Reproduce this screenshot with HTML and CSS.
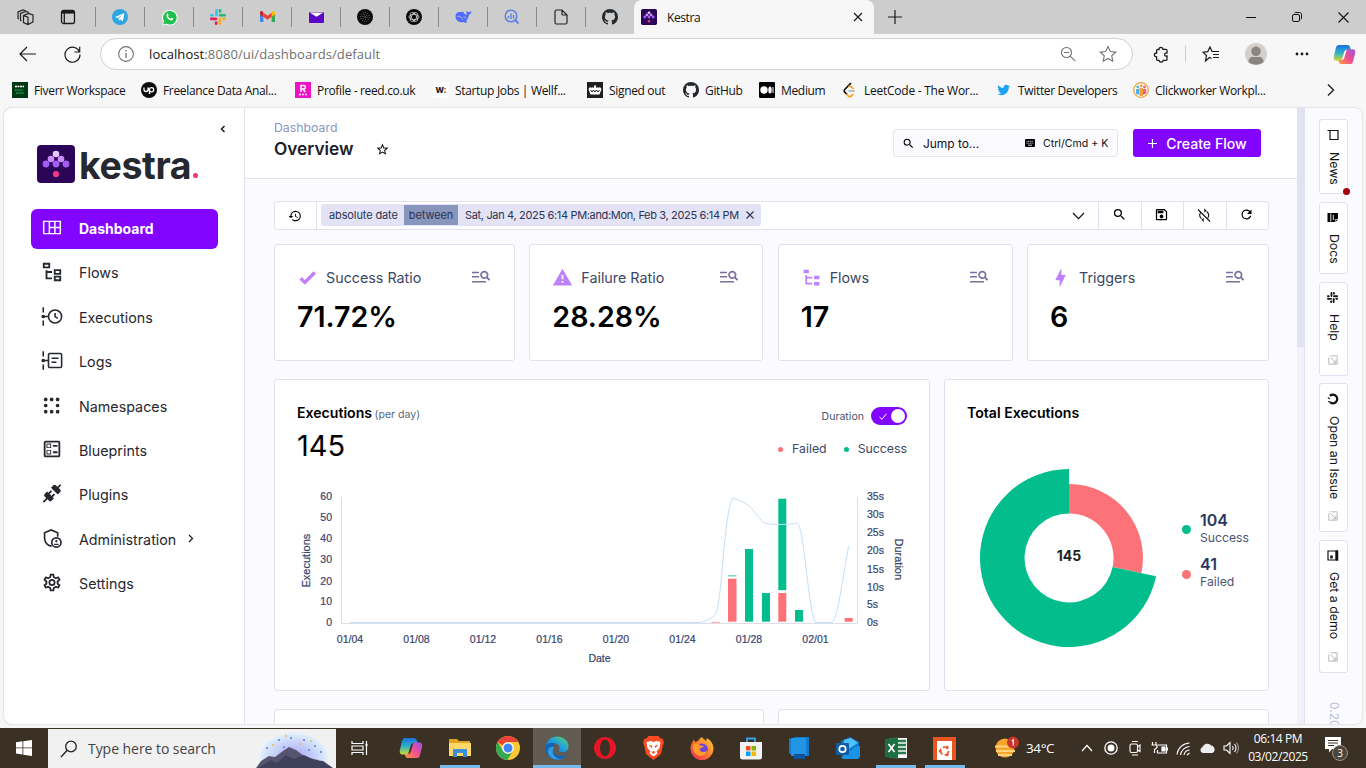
FILE: index.html
```html
<!DOCTYPE html>
<html lang="en">
<head>
<meta charset="utf-8">
<title>Kestra</title>
<link rel="stylesheet" href="styles.css">
</head>
<body>
<svg class="defs" width="0" height="0">
  <defs>
    <symbol id="github" viewBox="2 2 20 20"><path d="M12,2A10,10 0 0,0 2,12C2,16.42 4.87,20.17 8.84,21.5C9.34,21.58 9.5,21.27 9.5,21C9.5,20.77 9.5,20.14 9.5,19.31C6.73,19.91 6.14,17.97 6.14,17.97C5.68,16.81 5.03,16.5 5.03,16.5C4.12,15.88 5.1,15.9 5.1,15.9C6.1,15.97 6.63,16.93 6.63,16.93C7.5,18.45 8.97,18 9.54,17.76C9.63,17.11 9.89,16.67 10.17,16.42C7.95,16.17 5.62,15.31 5.62,11.5C5.62,10.39 6,9.5 6.65,8.79C6.55,8.54 6.2,7.5 6.75,6.15C6.75,6.15 7.59,5.88 9.5,7.17C10.29,6.95 11.15,6.84 12,6.84C12.85,6.84 13.71,6.95 14.5,7.17C16.41,5.88 17.25,6.15 17.25,6.15C17.8,7.5 17.45,8.54 17.35,8.79C18,9.5 18.38,10.39 18.38,11.5C18.38,15.32 16.04,16.16 13.81,16.41C14.17,16.72 14.5,17.33 14.5,18.26C14.5,19.6 14.5,20.68 14.5,21C14.5,21.27 14.66,21.59 15.17,21.5C19.14,20.16 22,16.42 22,12A10,10 0 0,0 12,2Z"/></symbol>
    <symbol id="magnify" viewBox="0 0 24 24"><path d="M9.5,3A6.5,6.5 0 0,1 16,9.5C16,11.11 15.41,12.59 14.44,13.73L14.71,14H15.5L20.5,19L19,20.5L14,15.5V14.71L13.73,14.44C12.59,15.41 11.11,16 9.5,16A6.5,6.5 0 0,1 3,9.5A6.5,6.5 0 0,1 9.5,3M9.5,5C7,5 5,7 5,9.5C5,12 7,14 9.5,14C12,14 14,12 14,9.5C14,7 12,5 9.5,5Z"/></symbol>
    <symbol id="list-search" viewBox="0 0 20 14"><path d="M1 2.500h7M1 6.800h7M1 11.800h14" fill="none" stroke="#7c6fa0" stroke-width="1.500"/><circle cx="13.300" cy="4.900" r="3.300" fill="none" stroke="#7c6fa0" stroke-width="1.700"/><path d="M15.600 7.200l3 3" stroke="#7c6fa0" stroke-width="1.900"/></symbol>
    <symbol id="kestra-mark" viewBox="0 0 38 38"><rect width="38" height="38" rx="4" fill="#2b0558"/><circle cx="19" cy="9" r="3.300" fill="#e5c5ff"/><circle cx="14" cy="14" r="3.300" fill="#cb8dfb"/><circle cx="24" cy="14" r="3.300" fill="#cb8dfb"/><circle cx="9" cy="19" r="3.400" fill="#a45cf5"/><circle cx="19" cy="19" r="3.400" fill="#a45cf5"/><circle cx="29" cy="19" r="3.400" fill="#a45cf5"/><circle cx="19" cy="29" r="3.100" fill="#f03a88"/></symbol>
    <symbol id="ext" viewBox="0 0 12 12"><path d="M1 3v8h10V1H3.500M1 1h1M3 3l6.500 6.500M5.500 9.500h4v-4" fill="none" stroke="#b8b8bc" stroke-width="1.200"/></symbol>
    <symbol id="slack4" viewBox="0 0 16 16"><rect x="5.200" y="0" width="2.600" height="7.200" rx="1.300" fill="var(--a)"/><rect x="0" y="4.900" width="3.900" height="2.600" rx="1.200" fill="var(--a)"/><rect x="8.800" y="4.900" width="7.200" height="2.600" rx="1.300" fill="var(--b)"/><rect x="8.800" y="0" width="2.600" height="3.900" rx="1.200" fill="var(--b)"/><rect x="8.400" y="8.600" width="2.600" height="7.400" rx="1.300" fill="var(--c)"/><rect x="12.200" y="8.600" width="3.800" height="2.600" rx="1.200" fill="var(--c)"/><rect x="0" y="8.600" width="7.200" height="2.600" rx="1.300" fill="var(--d)"/><rect x="4.800" y="12.200" width="2.600" height="3.800" rx="1.200" fill="var(--d)"/></symbol>
    <linearGradient id="cpA" x1="0" y1="0" x2="0" y2="1"><stop offset="0" stop-color="#1d6fdd"/><stop offset=".5" stop-color="#2bb3c9"/><stop offset="1" stop-color="#d9d62d"/></linearGradient>
    <linearGradient id="cpB" x1="1" y1="0" x2="0" y2="1"><stop offset="0" stop-color="#9a54e8"/><stop offset=".5" stop-color="#ef4f90"/><stop offset="1" stop-color="#ff9a3d"/></linearGradient>
    <linearGradient id="edgeG" x1="0" y1="1" x2="1" y2="0"><stop offset="0" stop-color="#0c59b4"/><stop offset=".5" stop-color="#1d9fe0"/><stop offset="1" stop-color="#5bd85f"/></linearGradient>
    <linearGradient id="ffG" x1="1" y1="0" x2="0" y2="1"><stop offset="0" stop-color="#ffd93b"/><stop offset=".5" stop-color="#ff7a2b"/><stop offset="1" stop-color="#e8225f"/></linearGradient>
    <symbol id="copilot" viewBox="0 0 24 22"><path d="M6 1h9c2 0 2.500 1 3 3l.7 2H15c-2 0-3 1-3.500 3l-1.700 6c-.5 2-1.300 2.500-3 2.500H3.500C1 17.500.2 15.500 1 12.500L3 4C3.500 2 4.500 1 6 1z" fill="url(#cpA)"/><path d="M18 21H9c-2 0-2.500-1-3-3l-.2-1h2.700c2 0 3-1 3.500-3l1.700-6c.5-2 1.300-2.500 3-2.500h3.800c2.500 0 3.300 2 2.500 5L21 18c-.5 2-1.500 3-3 3z" fill="url(#cpB)"/></symbol>
  </defs>
</svg>

<header class="tabs">
  <div class="tab-tools">
    <svg width="17" height="17" viewBox="0 0 17 17" fill="none" stroke="#222" stroke-width="1.200"><path d="M6.500 6.500l5-2 4.500 1.500v7l-5 2.500-4.500-2zM6.500 6.500l4.500 1.700v7M4.500 12l-1-.5v-7L9 2.500l3 1M2 10l-1-.5V3l5-2 3 1"/></svg>
    <svg width="16" height="16" viewBox="0 0 16 16" fill="none" stroke="#1b1b1b" stroke-width="1.300"><rect x="1.500" y="1.500" width="13" height="13" rx="2"/><path d="M1.500 3.300h13" stroke-width="2.600"/><path d="M4.300 4v10"/></svg>
  </div>
  <div class="pin"><svg width="16" height="16" viewBox="0 0 16 16"><circle cx="8" cy="8" r="8" fill="#2ca5e0"/><path d="M3 8l9.500-3.900-1.600 8.200-2.600-1.900-1.400 1.300-.3-2.300 4-3.700-5 3.200z" fill="#fff"/></svg></div>
  <div class="pin"><svg width="17" height="17" viewBox="0 0 17 17"><path d="M1 16.500l1-4A7.800 7.800 0 1 1 5 15.500z" fill="#fff"/><path d="M2 15.500l1-3.300A6.800 6.800 0 1 1 5.300 14.500z" fill="#1cc04a"/><path d="M5.500 5c.5-.9 1.300-.8 1.600 0l.5 1.200-.7 1c.7 1.300 1.500 2 2.800 2.500l.9-1 1.700.9c0 1.600-1.400 2.100-2.600 1.800C7 10.600 5 8 5.500 5z" fill="#fff"/></svg></div>
  <div class="pin"><svg class="slack-color" width="16" height="16"><use href="#slack4"/></svg></div>
  <div class="pin"><svg width="15" height="12" viewBox="0 0 15 12"><path d="M0 1.500V11h3.400V5z" fill="#4285f4"/><path d="M15 1.500V11h-3.400V5z" fill="#34a853"/><path d="M11.600 2v4L15 3.500V1.600C15 .2 13.500-.4 12.400.5z" fill="#fbbc04"/><path d="M3.400 2v4L0 3.500V1.600C0 .2 1.500-.4 2.600.5z" fill="#c5221f"/><path d="M3.400 1.800v4l4.100 3 4.100-3v-4L7.500 4.800z" fill="#ea4335"/></svg></div>
  <div class="pin"><svg width="15" height="11" viewBox="0 0 15 11"><rect width="15" height="11" rx="1" fill="#5b08c9"/><path d="M.5 .5l7 4.300L14.500 .5z" fill="#fff"/></svg></div>
  <div class="pin"><svg width="16" height="16" viewBox="0 0 16 16"><circle cx="8" cy="8" r="8" fill="#0b0b0b"/><g fill="none" stroke="#777" stroke-dasharray="1 1.200"><circle cx="8" cy="8" r="4.300"/><circle cx="8" cy="8" r="2.300"/></g><circle cx="8" cy="8" r=".7" fill="#999"/></svg></div>
  <div class="pin"><svg width="16" height="16" viewBox="0 0 16 16"><circle cx="8" cy="8" r="8" fill="#0b0b0b"/><g fill="none" stroke="#d8d8d8" stroke-width=".8"><ellipse cx="8" cy="8" rx="5" ry="2.600"/><ellipse cx="8" cy="8" rx="5" ry="2.600" transform="rotate(60 8 8)"/><ellipse cx="8" cy="8" rx="5" ry="2.600" transform="rotate(120 8 8)"/></g></svg></div>
  <div class="pin"><svg width="17" height="14" viewBox="0 0 17 14"><path d="M.5 6C.5 3 3 1.500 5.500 2c1.500.3 2-.7 3.300-.2-.5.600-.4 1.200.4 1.700 1 .6 1.500 1.500 2.300 1.500C12.200 3.800 11 3 11.300.8c.8 1.200 1.700 1 2.800 1.400.8-.8 1.700-.9 2.400-.7-.2 2-1.500 3-2.800 3.500-.2 3-1.200 4.500-2.700 5.700l1.400 1.600c-1.400.7-2.900.3-4-.3C4 13 .5 10.500.5 6z" fill="#4d6bfe"/><path d="M2.500 6.500c2-1 4.300.8 5.300 3.200M8.500 6.800c1-.2 1.800.4 2 1.500" fill="none" stroke="#cdcdcd" stroke-width=".9"/></svg></div>
  <div class="pin"><svg width="16" height="16" viewBox="0 0 16 16" fill="none" stroke="#5b84e0"><circle cx="7" cy="7" r="5.800" stroke-width="1.500"/><path d="M11.300 11.300l3.200 3.200" stroke-width="2"/><path d="M4.500 7v2.200M7 4.500v5.500M9.500 6v3.500" stroke-width="1.400"/></svg></div>
  <div class="pin"><svg width="14" height="16" viewBox="0 0 14 16" fill="none" stroke="#222" stroke-width="1.200"><path d="M1 2.500C1 1.500 1.500 1 2.500 1H8l5 5v7.500c0 1-.5 1.500-1.500 1.500h-9C1.500 15 1 14.500 1 13.500zM8 1v4c0 .7.300 1 1 1h4"/></svg></div>
  <div class="pin"><svg width="16" height="16" fill="#24292e"><use href="#github"/></svg></div>
  <div class="tab-active">
    <svg width="16" height="16"><use href="#kestra-mark"/></svg>
    <span class="tab-title">Kestra</span>
    <svg width="10" height="10" viewBox="0 0 10 10" stroke="#1b1b1b" stroke-width="1.200"><path d="M1 1l8 8M9 1l-8 8"/></svg>
  </div>
  <svg class="tab-new" width="14" height="14" viewBox="0 0 14 14" stroke="#1b1b1b" stroke-width="1.200"><path d="M7 0v14M0 7h14"/></svg>
  <div class="win">
    <svg width="10" height="10" viewBox="0 0 10 10" stroke="#111" stroke-width="1"><path d="M0 5.500h10"/></svg>
    <svg width="10" height="10" viewBox="0 0 10 10" fill="none" stroke="#111"><rect x=".5" y="2.500" width="7" height="7" rx="1.500"/><path d="M2.500 1c.3-.4.700-.5 1.200-.5h3.500c1.500 0 2.300.8 2.300 2.300v3.500c0 .5-.2 1-.6 1.200"/></svg>
    <svg width="11" height="11" viewBox="0 0 11 11" stroke="#111" stroke-width="1.100"><path d="M.5.5l10 10M10.500.5l-10 10"/></svg>
  </div>
</header>

<div class="toolbar">
  <svg class="nav-back" width="17" height="16" viewBox="0 0 17 16" fill="none" stroke="#1b1b1b" stroke-width="1.200"><path d="M17 8H1M8 1L1 8l7 7"/></svg>
  <svg class="nav-reload" width="17" height="17" viewBox="0 0 17 17" fill="none" stroke="#1b1b1b" stroke-width="1.200"><path d="M15.500 6A7.500 7.500 0 1 0 16 8.500M15.700.8V6h-5.200"/></svg>
  <div class="address">
    <svg width="16" height="16" viewBox="0 0 16 16" fill="none" stroke="#707070"><circle cx="8" cy="8" r="7.400" stroke-width="1.100"/><path d="M8 7v5M8 4v1.500" stroke-width="1.300"/></svg>
    <span class="url"><b>localhost</b>:8080/ui/dashboards/default</span>
    <svg width="16" height="16" viewBox="0 0 16 16" fill="none" stroke="#707070" stroke-width="1.100"><circle cx="6.500" cy="6.500" r="5"/><path d="M10.200 10.200l5 5M4 6.500h5"/></svg>
    <svg class="fav" width="18" height="18" viewBox="0 0 18 18" fill="none" stroke="#707070" stroke-width="1.100"><path d="M9 1.500l2.300 5 5.400.6-4 3.700 1.100 5.400L9 13.500l-4.800 2.700 1.100-5.400-4-3.700 5.400-.6z"/></svg>
  </div>
  <div class="tool-icons">
    <svg width="16" height="17" viewBox="0 0 16 17" fill="none" stroke="#1b1b1b" stroke-width="1.300"><path d="M6 3.500a2 2 0 0 1 4-.2h2.800c.8 0 1.200.4 1.200 1.200V7c-3-.6-3.500 3.500 0 3v3.200c0 .8-.4 1.200-1.200 1.200H10.300c-.3 2.300-4 2.300-4.300 0H4.800c-.8 0-1.200-.4-1.200-1.200V11c-2.900 0-2.900-4 0-4V4.700c0-.8.400-1.200 1.200-1.200z"/></svg>
    <i class="tool-sep"></i>
    <svg class="t-favs" width="18" height="17" viewBox="0 0 18 17" fill="none" stroke="#1b1b1b" stroke-width="1.200"><path d="M9.500 12.500L7.500 11.500 3.500 15l1-5.500L1 6.200l4.800-.6L8 1l2 4.500h7M11 8.500h6M11 11.500h6"/></svg>
    <svg class="t-user" width="22" height="22" viewBox="0 0 22 22"><circle cx="11" cy="11" r="11" fill="#d2cfcc"/><circle cx="11" cy="8.300" r="4.800" fill="#8a8581"/><path d="M3.500 19c0-3.500 2-5 4-5h7c2 0 4 1.500 4 5-4 3.700-11 3.700-15 0z" fill="#8a8581"/></svg>
    <svg class="t-more" width="14" height="4" viewBox="0 0 14 4" fill="#1b1b1b"><circle cx="2" cy="2" r="1.400"/><circle cx="7" cy="2" r="1.400"/><circle cx="12" cy="2" r="1.400"/></svg>
    <svg class="t-cop" width="23" height="21"><use href="#copilot"/></svg>
  </div>
</div>

<nav class="bookmarks">
  <a class="bm w1"><svg width="16" height="16" viewBox="0 0 16 16"><rect width="16" height="16" fill="#003912"/><path d="M3 4.500h9" stroke="#fff" stroke-width="1.500" stroke-dasharray="2 .5"/><path d="M3 8h8M4 11h8" stroke="#159a58" stroke-width="1.500" stroke-dasharray="1.500 .6"/></svg><span>Fiverr Workspace</span></a>
  <a class="bm w2"><svg width="16" height="16" viewBox="0 0 16 16"><circle cx="8" cy="8" r="8" fill="#0c0c0c"/><path d="M3 5.500v2a2 2 0 0 0 4 0v-2M8.500 12V7.500a2.100 2.100 0 1 1 2.100 2.300c-1.600 0-3-2-3.400-4" fill="none" stroke="#fff" stroke-width="1.300"/></svg><span>Freelance Data Anal...</span></a>
  <a class="bm w3"><svg width="16" height="16" viewBox="0 0 16 16"><rect width="16" height="16" fill="#f012c8"/><path d="M6 10V3.600h2.700a1.600 1.600 0 0 1 0 3.400H6M8 7l2.200 3" fill="none" stroke="#fff" stroke-width="1.500"/><path d="M4 12.500h8" stroke="#fff" stroke-width="1.500" stroke-dasharray="2 1"/></svg><span>Profile - reed.co.uk</span></a>
  <a class="bm w4"><span class="wf">w<i>:</i></span><span>Startup Jobs | Wellf...</span></a>
  <a class="bm w5"><svg width="16" height="16" viewBox="0 0 16 16"><rect width="16" height="16" fill="#1f1f1f"/><path d="M3.500 12.500L2 8.500a1.900 1.900 0 0 1 2.500-2.800A1.900 1.900 0 0 1 7 6V3.500h2V6a1.900 1.900 0 0 1 2.500-.3A1.900 1.900 0 0 1 14 8.500l-1.500 4z" fill="#fff"/><path d="M3.500 8l1.500 2 1.500-2L8 10l1.500-2 1.500 2 1.500-2" fill="none" stroke="#1f1f1f" stroke-width="1"/></svg><span>Signed out</span></a>
  <a class="bm w6"><svg width="16" height="16" fill="#24292e"><use href="#github"/></svg><span>GitHub</span></a>
  <a class="bm w7"><svg width="16" height="16" viewBox="0 0 16 16"><rect width="16" height="16" rx="1" fill="#000"/><circle cx="5" cy="8" r="3.700" fill="#fff"/><ellipse cx="11" cy="8" rx="1.700" ry="3.500" fill="#fff"/><path d="M14 5v6" stroke="#fff"/></svg><span>Medium</span></a>
  <a class="bm w8"><svg width="16" height="16" viewBox="0 0 16 16" fill="none" stroke-width="1.700"><path d="M9 1L2.700 7.500c-.8.900-.8 1.800 0 2.600L5 12.500" stroke="#111"/><path d="M4.500 12l1.800 2c1 .9 2 .9 3 0l2-2M6.500 4.800c1-.9 2-.7 2.800 0L11.500 7" stroke="#f5a11f"/><path d="M6.500 9H13" stroke="#b3b3b3"/></svg><span>LeetCode - The Wor...</span></a>
  <a class="bm w9"><svg width="14" height="14" viewBox="1 2 23 21" fill="#1da1f2"><path d="M22.460,6C21.690,6.350 20.860,6.580 20,6.690C20.880,6.160 21.560,5.320 21.880,4.310C21.050,4.810 20.130,5.160 19.160,5.360C18.370,4.500 17.260,4 16,4C13.650,4 11.730,5.920 11.730,8.290C11.730,8.630 11.770,8.960 11.840,9.270C8.280,9.090 5.110,7.380 3,4.790C2.630,5.420 2.420,6.160 2.420,6.940C2.420,8.430 3.170,9.750 4.330,10.500C3.620,10.500 2.960,10.300 2.380,10C2.380,12.110 3.860,13.850 5.820,14.240C5.460,14.340 5.080,14.390 4.690,14.390C4.420,14.390 4.150,14.360 3.890,14.310C4.430,16 6,17.260 7.890,17.290C6.430,18.450 4.580,19.130 2.560,19.130L1.540,19.070C3.440,20.290 5.700,21 8.120,21C16,21 20.330,14.460 20.330,8.790L20.320,8.230C21.160,7.630 21.880,6.870 22.460,6Z"/></svg><span>Twitter Developers</span></a>
  <a class="bm w10"><svg width="16" height="16" viewBox="0 0 16 16"><circle cx="8" cy="8" r="7.300" fill="#fff" stroke="#f0a23c" stroke-width="1.300"/><circle cx="4.800" cy="5" r="1.400" fill="#4fb3e6"/><path d="M3 7h3.500v6L3 12z" fill="#4fb3e6"/><circle cx="8.200" cy="4" r="1.400" fill="#f0a23c"/><path d="M6.500 6H10v8H6.500z" fill="#f0a23c"/><circle cx="11.500" cy="5" r="1.400" fill="#e6647d"/><path d="M10 7h3.300v4.500L10 13z" fill="#e6647d"/></svg><span>Clickworker Workpl...</span></a>
  <svg class="bm-more" width="8" height="12" viewBox="0 0 8 12" fill="none" stroke="#222" stroke-width="1.400"><path d="M1 .5l5.500 5.500L1 11.500"/></svg>
</nav>

<main class="app">
  <aside class="side">
    <svg class="collapse" width="6" height="8" viewBox="0 0 6 8" fill="none" stroke="#111" stroke-width="1.400"><path d="M4.500 1L1.500 4l3 3"/></svg>
    <div class="logo"><svg width="38" height="38"><use href="#kestra-mark"/></svg><span class="word">kestra</span><i class="dot"></i></div>
    <ul class="menu">
      <li class="on"><svg viewBox="0 0 24 24" width="21" height="21" fill="none" stroke="currentColor" stroke-width="1.700"><path d="M2.500 5h19v14h-19zM9 5v14M15.300 5v14M9 12h12.500"/></svg><span>Dashboard</span></li>
      <li><svg viewBox="0 0 24 24" width="22" height="22"><path d="M12 13H7v5h5v2H5V10h2v1h5v2M8 4v2H4V4h4m2-2H2v6h8V2m10 9v2h-4v-2h4m2-2h-8v6h8V9m-2 9v2h-4v-2h4m2-2h-8v6h8v-6Z"/></svg><span>Flows</span></li>
      <li><svg viewBox="0 0 24 24" width="21" height="21" fill="none" stroke="currentColor" stroke-width="1.800"><path d="M2 1.500v6M2 16.500v6M3 12h5M15.500 8v4.200l3 2"/><circle cx="15.500" cy="12" r="7.500"/><circle cx="2" cy="12" r="1.200" fill="currentColor"/></svg><span>Executions</span></li>
      <li><svg viewBox="0 0 24 24" width="21" height="21" fill="none" stroke="currentColor" stroke-width="1.800"><path d="M2 1.500v6M2 16.500v6M3 12h5M11.500 9.500h8M11.500 14h5.500"/><rect x="8" y="4" width="15" height="16" rx="1.500"/><circle cx="2" cy="12" r="1.200" fill="currentColor"/></svg><span>Logs</span></li>
      <li><svg viewBox="0 0 24 24" width="21" height="21"><circle cx="4.800" cy="5" r="2.100"/><circle cx="11.600" cy="5" r="2.100"/><circle cx="18.400" cy="5" r="2.100"/><circle cx="4.800" cy="12" r="2.100"/><circle cx="18.400" cy="12" r="2.100"/><circle cx="4.800" cy="19" r="2.100"/><circle cx="11.600" cy="19" r="2.100"/><circle cx="18.400" cy="19" r="2.100"/></svg><span>Namespaces</span></li>
      <li><svg viewBox="0 0 24 24" width="22" height="22"><path d="M13 7.500h5v2h-5zm0 7h5v2h-5zM19 3H5c-1.100 0-2 .9-2 2v14c0 1.100.9 2 2 2h14c1.100 0 2-.9 2-2V5c0-1.100-.9-2-2-2m0 16H5V5h14v14M11 6H6v5h5V6m-1 4H7V7h3v3m1 3H6v5h5v-5m-1 4H7v-3h3v3Z"/></svg><span>Blueprints</span></li>
      <li><svg viewBox="0 0 24 24" width="21" height="21"><path d="M21.400 7.500c.8.800.8 2.100 0 2.800l-2.800 2.800-7.800-7.800 2.800-2.800c.8-.8 2.100-.8 2.800 0l1.800 1.800 3-3 1.400 1.400-3 3 1.800 1.800m-5.800 5.800-1.400-1.400-2.800 2.800-2.100-2.100 2.800-2.800-1.400-1.400-2.800 2.800-1.500-1.400-2.800 2.800c-.8.8-.8 2.100 0 2.800l1.800 1.800-4 4 1.400 1.400 4-4 1.800 1.800c.8.800 2.100.8 2.800 0l2.800-2.800-1.400-1.400 2.800-2.800Z"/></svg><span>Plugins</span></li>
      <li><svg viewBox="0 0 24 24" width="21" height="21" fill="none" stroke="currentColor" stroke-width="1.900"><path d="M11.500 21c-5-1.500-8-5-8-10V5.500L11 2.200l7.500 3.300V10"/><circle cx="17" cy="16.500" r="5.300"/><circle cx="17" cy="15" r=".9" fill="currentColor" stroke-width="1"/><path d="M14.500 18.800h5" stroke-width="1.500"/></svg><span>Administration</span><svg class="more" width="6" height="9" viewBox="0 0 6 9" fill="none" stroke="#222" stroke-width="1.300"><path d="M1 1l3.500 3.500L1 8"/></svg></li>
      <li><svg viewBox="0 0 24 24" width="21" height="21"><path d="M12,8A4,4 0 0,1 16,12A4,4 0 0,1 12,16A4,4 0 0,1 8,12A4,4 0 0,1 12,8M12,10A2,2 0 0,0 10,12A2,2 0 0,0 12,14A2,2 0 0,0 14,12A2,2 0 0,0 12,10M10,22C9.750,22 9.540,21.820 9.500,21.580L9.130,18.930C8.500,18.680 7.960,18.340 7.440,17.940L4.950,18.950C4.730,19.030 4.460,18.950 4.340,18.730L2.340,15.270C2.210,15.050 2.270,14.780 2.460,14.630L4.570,12.970L4.500,12L4.570,11L2.460,9.370C2.270,9.220 2.210,8.950 2.340,8.730L4.340,5.270C4.460,5.050 4.730,4.960 4.950,5.050L7.440,6.050C7.960,5.660 8.500,5.320 9.130,5.070L9.500,2.420C9.540,2.180 9.750,2 10,2H14C14.250,2 14.460,2.180 14.500,2.420L14.870,5.070C15.500,5.320 16.040,5.660 16.560,6.050L19.050,5.050C19.270,4.960 19.540,5.050 19.660,5.270L21.660,8.730C21.790,8.950 21.730,9.220 21.540,9.370L19.430,11L19.500,12L19.430,13L21.540,14.630C21.730,14.780 21.790,15.050 21.660,15.270L19.660,18.730C19.540,18.950 19.270,19.040 19.050,18.950L16.560,17.950C16.040,18.340 15.500,18.680 14.870,18.930L14.500,21.580C14.460,21.820 14.250,22 14,22H10M11.250,4L10.880,6.610C9.680,6.860 8.620,7.500 7.850,8.390L5.440,7.350L4.690,8.650L6.800,10.200C6.400,11.370 6.400,12.640 6.800,13.800L4.680,15.360L5.430,16.660L7.860,15.620C8.630,16.500 9.680,17.140 10.870,17.380L11.240,20H12.760L13.130,17.390C14.320,17.140 15.370,16.500 16.140,15.620L18.570,16.660L19.320,15.360L17.200,13.810C17.600,12.640 17.600,11.370 17.200,10.200L19.310,8.650L18.560,7.350L16.150,8.390C15.380,7.500 14.320,6.860 13.120,6.620L12.750,4H11.250Z"/></svg><span>Settings</span></li>
    </ul>
  </aside>

  <section class="page">
    <header class="top">
      <div class="titles">
        <div class="crumb">Dashboard</div>
        <h1><span>Overview</span><svg width="13" height="13" viewBox="1 1 22 22"><path d="M12,15.390L8.240,17.660L9.230,13.380L5.910,10.500L10.290,10.130L12,6.090L13.710,10.130L18.090,10.500L14.770,13.380L15.760,17.660M22,9.240L14.810,8.630L12,2L9.190,8.630L2,9.240L7.450,13.970L5.820,21L12,17.270L18.180,21L16.540,13.970L22,9.240Z"/></svg></h1>
      </div>
      <div class="jump"><svg width="13" height="13"><use href="#magnify"/></svg><span class="jump-t">Jump to...</span><svg width="10" height="8" viewBox="0 0 10 8"><rect width="10" height="8" rx="1"/><path d="M1.500 2.300h7M1.500 4.200h7" stroke="#fff" stroke-width=".9" stroke-dasharray="1 .7"/><path d="M3 6.200h4" stroke="#fff" stroke-width=".8"/></svg><span class="jump-k">Ctrl/Cmd + K</span></div>
      <div class="create"><svg width="9" height="9" viewBox="0 0 9 9" stroke="#fff" stroke-width="1.200"><path d="M4.500 0v9M0 4.500h9"/></svg><span>Create Flow</span></div>
    </header>

    <div class="body">
      <div class="filter">
        <div class="f-hist"><svg width="14" height="14" viewBox="0 0 24 24"><path d="M13.500,8H12V13L16.280,15.540L17,14.330L13.500,12.250V8M13,3A9,9 0 0,0 4,12H1L4.960,16.030L9,12H6A7,7 0 0,1 13,5A7,7 0 0,1 20,12A7,7 0 0,1 13,19C11.070,19 9.320,18.210 8.060,16.940L6.640,18.360C8.270,20 10.500,21 13,21A9,9 0 0,0 22,12A9,9 0 0,0 13,3"/></svg></div>
        <div class="chip"><span class="c1">absolute date</span><span class="c2">between</span><span class="c3">Sat, Jan 4, 2025 6:14 PM:and:Mon, Feb 3, 2025 6:14 PM</span><svg width="8" height="8" viewBox="0 0 8 8" stroke="#2b3452" stroke-width="1.100"><path d="M.5.5l7 7M7.500.5l-7 7"/></svg></div>
        <svg class="f-down" width="13" height="8" viewBox="0 0 13 8" fill="none" stroke="#111" stroke-width="1.200"><path d="M1 1l5.500 5.700L12 1"/></svg>
        <div class="f-btn"><svg width="15" height="15"><use href="#magnify"/></svg></div>
        <div class="f-btn"><svg width="15" height="15" viewBox="0 0 24 24"><path d="M17 3H5C3.890 3 3 3.900 3 5V19C3 20.100 3.890 21 5 21H19C20.100 21 21 20.100 21 19V7L17 3M19 19H5V5H16.170L19 7.830V19M12 12C10.340 12 9 13.340 9 15S10.340 18 12 18 15 16.660 15 15 13.660 12 12 12M6 6H15V10H6V6Z"/></svg></div>
        <div class="f-btn"><svg width="14" height="14" viewBox="0 0 14 14" fill="none" stroke="#111" stroke-width="1.100"><path d="M1 1.500l12 12M3.500 4.500a5 5 0 0 0 1 6.200M10.800 10a5 5 0 0 0-1.200-6.500"/><path d="M7.300.3l2.200 2.300-2.200 2.200zM6.700 14l-2.200-2.200 2.200-2z" fill="#111" stroke="none"/></svg></div>
        <div class="f-btn last"><svg width="15" height="15" viewBox="0 0 24 24"><path d="M17.650,6.350C16.200,4.900 14.210,4 12,4A8,8 0 0,0 4,12A8,8 0 0,0 12,20C15.730,20 18.840,17.450 19.730,14H17.650C16.830,16.330 14.610,18 12,18A6,6 0 0,1 6,12A6,6 0 0,1 12,6C13.660,6 15.140,6.690 16.220,7.780L13,11H20V4L17.650,6.350Z"/></svg></div>
      </div>

      <div class="stats">
        <div class="card stat"><div class="st-h"><svg width="21" height="21" viewBox="0 0 24 24"><path d="M9,20.420L2.790,14.210L5.620,11.380L9,14.770L18.880,4.880L21.710,7.710L9,20.420Z"/></svg><span>Success Ratio</span><svg width="20" height="14"><use href="#list-search"/></svg></div><div class="st-v">71.72%</div></div>
        <div class="card stat"><div class="st-h"><svg width="21" height="21" viewBox="0 0 24 24"><path d="M13 14H11V9H13M13 18H11V16H13M1 21H23L12 2L1 21Z"/></svg><span>Failure Ratio</span><svg width="20" height="14"><use href="#list-search"/></svg></div><div class="st-v">28.28%</div></div>
        <div class="card stat"><div class="st-h"><svg width="21" height="21" viewBox="0 0 24 24"><path d="M3,3H9V7H3V3M15,10H21V14H15V10M15,17H21V21H15V17M13,13H7V18H13V20H7L5,20V9H7V11H13V13Z"/></svg><span>Flows</span><svg width="20" height="14"><use href="#list-search"/></svg></div><div class="st-v">17</div></div>
        <div class="card stat"><div class="st-h"><svg width="21" height="21" viewBox="0 0 24 24"><path d="M11 15H6L13 1V9H18L11 23V15Z"/></svg><span>Triggers</span><svg width="20" height="14"><use href="#list-search"/></svg></div><div class="st-v">6</div></div>
      </div>

      <div class="charts">
        <div class="card exec">
          <div class="ex-h">
            <div><div class="ct">Executions <small>(per day)</small></div><div class="big">145</div></div>
            <div class="ex-r">
              <div class="dur"><span>Duration</span><span class="toggle"><svg width="8" height="7" viewBox="0 0 8 7" fill="none" stroke="#fff"><path d="M.5 4L3 6.300 7.500.7"/></svg><i></i></span></div>
              <div class="lg"><i class="red"></i><span>Failed</span><i class="green"></i><span>Success</span></div>
            </div>
          </div>
          <svg class="plot" width="611" height="190" viewBox="297 482 611 190">
            <path d="M341.500 497V623.500H857.500V497" fill="none" stroke="#dcdfe8"/>
            <g fill="#fd7278"><rect x="711.500" y="621.800" width="8.300" height="1" opacity=".7"/><rect x="728" y="578.700" width="8.500" height="43"/><rect x="778.300" y="593" width="8" height="28.700"/><rect x="844.700" y="618" width="8" height="3.700"/></g>
            <g fill="#03be8c"><rect x="728" y="575" width="8.500" height="1.600" opacity=".5"/><rect x="745" y="549" width="8" height="72.700"/><rect x="762" y="593" width="8" height="28.700"/><rect x="778.300" y="498.700" width="8" height="91.500"/><rect x="795" y="610" width="8" height="11.700"/></g>
            <path d="M350 622.500H699C703 622.500 713 618 715.500 614.500C722 603 724 513 732.500 498.200C737 499 744 502 749 506C755 510.500 760 522 766 523.500C774 525 790 524.500 797 523.300C804 523.500 808 610 815.500 622.500H832.500C838 617 844 570 848.700 546" fill="none" stroke="#c3dff8"/>
            <g class="yl"><text x="332" y="500">60</text><text x="332" y="521">50</text><text x="332" y="542">40</text><text x="332" y="563">30</text><text x="332" y="584.500">20</text><text x="332" y="605">10</text><text x="332" y="626">0</text></g>
            <g class="yr"><text x="867" y="500">35s</text><text x="867" y="518">30s</text><text x="867" y="536">25s</text><text x="867" y="554">20s</text><text x="867" y="572.500">15s</text><text x="867" y="590.500">10s</text><text x="867" y="608">5s</text><text x="867" y="626">0s</text></g>
            <g class="xl"><text x="350" y="643">01/04</text><text x="416.500" y="643">01/08</text><text x="483" y="643">01/12</text><text x="549.500" y="643">01/16</text><text x="616" y="643">01/20</text><text x="682.500" y="643">01/24</text><text x="749" y="643">01/28</text><text x="815.500" y="643">02/01</text><text x="599.500" y="662">Date</text></g>
            <text class="ax" transform="translate(310 587.500) rotate(-90)">Executions</text>
            <text class="ax" transform="translate(894.500 538.500) rotate(90)">Duration</text>
          </svg>
        </div>
        <div class="card total">
          <div class="ct">Total Executions</div>
          <div class="pie">
            <svg width="180" height="180" viewBox="979 468 180 180"><path d="M1069 484A74 74 0 0 1 1141.400 573.100L1112.600 567.100A44.500 44.500 0 0 0 1069 513.500z" fill="#fd7278"/><path d="M1156.100 576.200A89 89 0 1 1 1069 469V513.500A44.500 44.500 0 1 0 1112.600 567.100z" fill="#03be8c"/><text class="pc" x="1069" y="561">145</text></svg>
            <div class="pl"><div class="pi"><i class="green"></i><div><b>104</b><span>Success</span></div></div><div class="pi"><i class="red"></i><div><b>41</b><span>Failed</span></div></div></div>
          </div>
        </div>
      </div>
      <div class="next"><div class="card"></div><div class="card"></div></div>
    </div>
  </section>
  <div class="scroll"><i></i></div>
  <aside class="rail">
    <div class="rt r1"><svg width="12" height="12" viewBox="0 0 12 12" fill="none" stroke="#111" stroke-width="1.200"><path d="M.5 1.500h10.500v9H3V1.500"/></svg><span>News</span><i class="badge"></i></div>
    <div class="rt r2"><svg width="12" height="11" viewBox="0 0 12 11"><path d="M.5 1H11v6.500L8.500 10H.5z"/><path d="M3.800 1.500v8M6.300 3v5" stroke="#fff" stroke-width=".9"/><path d="M8.300 10V7.500H11" fill="none" stroke="#fff" stroke-width=".7"/></svg><span>Docs</span></div>
    <div class="rt r3"><svg class="slack-black" width="11" height="11"><use href="#slack4"/></svg><span>Help</span><svg width="10" height="10"><use href="#ext"/></svg></div>
    <div class="rt r4"><svg width="12" height="12" viewBox="0 0 12 12" fill="none" stroke="#111"><path d="M3 2.800A4.300 4.300 0 1 1 3 9.200" stroke-width="2.300"/><path d="M1 4.500q.5 1 2 1M1 8.500l2 .5" stroke-width="1.200"/></svg><span>Open an Issue</span><svg width="10" height="10"><use href="#ext"/></svg></div>
    <div class="rt r5"><svg width="12" height="11" viewBox="0 0 12 11" fill="none" stroke="#111" stroke-width="1.200"><path d="M1 1h8v9H1z"/><path d="M10 .3v10.400" stroke-width="2.500"/><path d="M4.500 5.500v3" stroke-width="2.500"/></svg><span>Get a demo</span><svg width="10" height="10"><use href="#ext"/></svg></div>
    <div class="ver">0.20</div>
  </aside>
</main>

<footer class="task">
  <div class="start"><svg width="16" height="16" viewBox="0 0 16 16" fill="#fff"><path d="M0 2.200l6.500-.9v6.200H0zM7.300 1.200L16 0v7.500H7.300zM0 8.300h6.500v6.200L0 13.600zM7.300 8.300H16V16l-8.700-1.200z"/></svg></div>
  <div class="search"><svg width="18" height="18" viewBox="0 0 18 18" fill="none" stroke="#222" stroke-width="1.300"><circle cx="11" cy="6.500" r="5.300"/><path d="M7.200 10.300L1 17"/></svg><span>Type here to search</span>
    <svg class="art" width="82" height="36" viewBox="0 0 82 36"><defs><radialGradient id="glow"><stop offset="0" stop-color="#b99af3"/><stop offset=".5" stop-color="#bfc9fa"/><stop offset="1" stop-color="#e0f0fb"/></radialGradient></defs><ellipse cx="40" cy="26" rx="34" ry="25" fill="url(#glow)"/><g fill="#5e74d8"><circle cx="13" cy="16" r="1"/><circle cx="25" cy="8" r="1"/><circle cx="37" cy="6" r="1"/><circle cx="50" cy="8" r="1"/><circle cx="61" cy="14" r="1"/><circle cx="67" cy="20" r="1"/><circle cx="30" cy="15" r=".9"/><circle cx="55" cy="18" r=".9"/></g><g fill="#eeba52"><circle cx="19" cy="13" r="1"/><circle cx="32" cy="4" r="1"/><circle cx="46" cy="12" r="1"/><circle cx="57" cy="9" r="1"/></g><path d="M2 36l5-7 8-5 6 1 8-6 6-4 7 3 8 6 6 2 8 2 8 6 6 2z" fill="#57546f"/><path d="M4 36l13-8 6 3 9-8 8 4 10-4 10 5 9 1 10 7z" fill="#3f4059"/></svg>
  </div>
  <div class="tv"><svg width="18" height="16" viewBox="0 0 18 16" fill="none" stroke="#fff" stroke-width="1.200"><path d="M1 1v2.500h11V1M1 15v-2.500h11V15M1 6h11v4H1zM15.500 1v14M14 5h3"/></svg></div>
  <div class="apps">
    <div><svg width="24" height="22"><use href="#copilot"/></svg></div>
    <div class="run"><svg width="22" height="20" viewBox="0 0 22 20"><path d="M0 1h8l2 2h11v15H0z" fill="#e3a21a"/><path d="M0 5h22v13H0z" fill="#ffd869"/><path d="M4 11h14v8h-4v-4H8v4H4z" fill="#3c8fd6"/></svg></div>
    <div><svg width="24" height="24" viewBox="0 0 24 24"><circle cx="12" cy="12" r="12" fill="#fcc934"/><path d="M12 0a12 12 0 0 1 10.400 6H12a6 6 0 0 0-5.500 3.600L1.600 6A12 12 0 0 1 12 0z" fill="#ea4335"/><path d="M1.600 6a12 12 0 0 0 9.800 18l5.400-9A6 6 0 0 1 6.500 14z" fill="#34a853"/><circle cx="12" cy="12" r="5.800" fill="#fff"/><circle cx="12" cy="12" r="4.500" fill="#4285f4"/></svg></div>
    <div class="cur"><svg width="24" height="24" viewBox="0 0 24 24"><path d="M1 10C2 4 6.500.5 12 .5c6.500 0 11.500 4.500 11.500 9.800 0 4.200-3.500 6-6.500 6-2.500 0-3.700-.9-3.500-1.700.5-.8 1-1.500 1-2.800C14.500 8 9 6 5 7.500 2.500 8.500 1.200 10 .8 12z" fill="url(#edgeG)"/><path d="M.6 12c.5-4 5-6 9.500-4.500C7 10 6.500 15 10 18c3.500 3 9 2 12 0-3 5-8 6.500-13 5.200C4 21.500.2 17 .6 12z" fill="#1263bd"/><path d="M9 11c-4 7 2 12.500 8 12-8 2.500-15-3-14-9 .5-2.500 3-4 6-3z" fill="#2f9de4"/></svg></div>
    <div><svg width="22" height="22" viewBox="0 0 22 22"><ellipse cx="11" cy="11" rx="11" ry="11" fill="#e81526"/><ellipse cx="11" cy="11" rx="5" ry="8.500" fill="#3a3024"/></svg></div>
    <div><svg width="21" height="24" viewBox="0 0 21 24"><path d="M5.500 0h10l2 2.500h2l1.500 4-1 2.500-2 9-7.500 6L3 18 1 9 0 6.500l1.500-4h2z" fill="#fb4b22"/><path d="M3.500 6l4-1 3 1 3-1 4 1-1 6-3 3.500 1 2-4 3-4-3 1-2L4.500 12z" fill="#fff"/><path d="M5.500 8.500l4 1.500-1 2zM15.500 8.500l-4 1.500 1 2zM8.500 16l2-1 2 1-2 2z" fill="#fb4b22"/></svg></div>
    <div><svg width="24" height="24" viewBox="0 0 24 24"><path d="M12 1c1 2 3 2.500 4 4 1-.5.500-2 .5-3 4 2 7 6 7 10.500a11.500 11.500 0 0 1-23 0C.5 9 2 6 4 3.500L5 6l3-1c1-2 2.500-3 4-4z" fill="url(#ffG)"/><circle cx="12" cy="13.500" r="6" fill="#7446d6"/><path d="M4 8c3-1 5 0 6 1.500L14 10c-1 2-4 1.500-4.500 3.500 1 3 5 3.500 8 1-1 5-7 7-11 4S2 11 4 8z" fill="#ff9a2b"/></svg></div>
    <div><svg width="22" height="23" viewBox="0 0 22 23"><path d="M7 6V1.500h8V6" fill="none" stroke="#36a7e5" stroke-width="1.800"/><path d="M0 5h22v15a2.500 2.500 0 0 1-2.500 2.500h-17A2.500 2.500 0 0 1 0 20z" fill="#f3f3f3"/><path d="M6 9h4.500v4.500H6z" fill="#f25022"/><path d="M11.500 9H16v4.500h-4.500z" fill="#7fba00"/><path d="M6 14.500h4.500V19H6z" fill="#00a4ef"/><path d="M11.500 14.500H16V19h-4.500z" fill="#ffb900"/></svg></div>
    <div><svg width="20" height="22" viewBox="0 0 20 22"><path d="M0 1.500h3V17H0zM5 0h15v19H5z" fill="#1579cd"/><rect x="2" y="1" width="15" height="18" rx="1" fill="#2196e6"/><path d="M5 17h11v5H5z" fill="#0c539d"/></svg></div>
    <div><svg width="24" height="22" viewBox="0 0 24 22"><path d="M5 4l9-4 9 5v13a3 3 0 0 1-3 3H7z" fill="#1374d2"/><path d="M8 3l7-2 7 5-14 9z" fill="#4fc1f5"/><path d="M24 9v10a3 3 0 0 1-3 3H7l-2-2 14-10z" fill="#1b93e7"/><rect y="6" width="13" height="12" rx="1" fill="#0f5ca9"/><circle cx="6.500" cy="12" r="3.200" fill="none" stroke="#fff" stroke-width="1.700"/></svg></div>
    <div class="run"><svg width="23" height="22" viewBox="0 0 23 22"><path d="M5 1h17v20H5z" fill="#f7f7f7"/><path d="M13 4h8M13 8h8M13 12h8M13 16h8" stroke="#267c4c" stroke-width="2.300"/><path d="M0 2l13-2v22L0 20z" fill="#1d6f42"/><path d="M3.500 7l6 8M9.500 7l-6 8" stroke="#fff" stroke-width="1.700"/></svg></div>
    <div class="run"><svg width="23" height="23" viewBox="0 0 23 23"><path d="M0 0h23v23H0z" fill="#e95420"/><path d="M4 0h15v23H4z" fill="#fff"/><path d="M4 0h15v4H4z" fill="#e95420"/><circle cx="11.500" cy="14" r="4" fill="none" stroke="#e95420" stroke-width="1.700" stroke-dasharray="6 2.300"/><g fill="#e95420"><circle cx="7" cy="14" r="1.300"/><circle cx="14.300" cy="10" r="1.300"/><circle cx="14.300" cy="18" r="1.300"/></g></svg></div>
  </div>
  <div class="weather"><svg width="26" height="24" viewBox="0 0 26 24"><circle cx="11" cy="12" r="9.500" fill="#f6a52a"/><path d="M1 10.500h18M2 15h19M4 19h14" stroke="#ffd480" stroke-width="1.800"/><circle cx="19" cy="6.500" r="6" fill="#c7352a"/><path d="M17.800 5l1.500-1.200v5.700" fill="none" stroke="#fff" stroke-width="1.200"/></svg><span>34°C</span></div>
  <div class="tray">
    <svg width="12" height="8" viewBox="0 0 12 8" fill="none" stroke="#fff" stroke-width="1.200"><path d="M1 7l5-5.500L11 7"/></svg>
    <svg width="14" height="14" viewBox="0 0 14 14"><circle cx="7" cy="7" r="6.200" fill="none" stroke="#fff" stroke-width="1.300"/><circle cx="7" cy="7" r="3.500" fill="#fff"/></svg>
    <svg width="12" height="16" viewBox="0 0 12 16" fill="none" stroke="#fff" stroke-width="1.100"><rect x="1" y="4" width="7.500" height="8.500" rx="1.500"/><path d="M8.500 7L11 5v6.500L8.500 10M3 1.500h6M3 15h6"/></svg>
    <svg width="17" height="14" viewBox="0 0 17 14" fill="none" stroke="#fff" stroke-width="1.200"><path d="M7 4h8.500v8H6.500V9M15.500 7h1.300v2h-1.300M1.500 1v3M5 1v3M.5 4h5.500v2.500l-2.500 2V12"/><path d="M11 6h3v4h-3z" fill="#fff"/></svg>
    <svg width="15" height="15" viewBox="0 0 15 15" fill="none" stroke="#fff" stroke-width="1.100"><path d="M1 13.500A13 13 0 0 1 13.500 2M4.500 14A10 10 0 0 1 13.500 5.500M8 14a6 6 0 0 1 5.500-5M11 14l2.500-2"/></svg>
    <svg width="17" height="12" viewBox="0 0 17 12"><path d="M3.500 11A3.200 3.200 0 0 1 3.500 5 5 5 0 0 1 12 3.500a4 4 0 0 1 1.500 7.500z" fill="#eee"/></svg>
    <svg width="16" height="14" viewBox="0 0 16 14" fill="none" stroke="#fff" stroke-width="1.100"><path d="M1 5h2.500L7 1.500v11L3.500 9H1zM9.500 5q1.500 2 0 4M11.500 3q3 4 0 8" /><path d="M13.500 1.500q4 5.500 0 11" opacity=".5"/></svg>
  </div>
  <div class="clock"><span>06:14 PM</span><span>03/02/2025</span></div>
  <div class="notif"><svg width="17" height="16" viewBox="0 0 17 16"><path d="M0 0h16v12H7l-3 3.500V12H0z" fill="#fff"/><path d="M3 3.500h10M3 6h10M3 8.500h6" stroke="#3a3024"/></svg><i>3</i></div>
</footer>
</body>
</html>
```
FILE: styles.css
```css
* { box-sizing: border-box; }
body {
  margin: 0; width: 1366px; height: 768px; overflow: hidden;
  display: flex; flex-direction: column;
  background: #f7f7f7; color: #111;
  font-family: "Inter", "Liberation Sans", sans-serif;
}
svg { display: block; flex: none; }
i { font-style: normal; }
.defs { position: absolute; }

/* browser tabs */
.tabs { height: 34px; flex: none; background: #cdcdcd; display: flex; align-items: center; font-family: "Open Sans", sans-serif; }
.tab-tools { width: 95px; display: flex; gap: 26px; padding-left: 17px; align-items: center; }
.pin { width: 49px; height: 20px; flex: none; border-left: 1px solid #8a8a8a; display: flex; align-items: center; justify-content: center; }
.tab-active { width: 240px; height: 34px; background: #f7f7f7; border-radius: 8px 8px 0 0; display: flex; align-items: center; padding: 0 11px 0 7px; flex: none; }
.tab-title { flex: 1; margin-left: 10px; font-size: 12px; letter-spacing: -.4px; }
.tab-new { margin-left: 14px; }
.win { margin-left: auto; display: flex; gap: 36px; margin-right: 17px; align-items: center; }

/* toolbar */
.toolbar { height: 39px; flex: none; display: flex; align-items: center; padding-top: 1px; font-family: "Open Sans", sans-serif; }
.nav-back { margin-left: 19px; }
.nav-reload { margin-left: 28px; }
.address { margin-left: 19px; width: 1033px; height: 32px; border: 1px solid #d0d0d0; border-radius: 16px; background: #fff; display: flex; align-items: center; padding: 0 15px 0 17px; }
.url { flex: 1; margin-left: 15px; font-size: 13px; color: #6f6f6f; letter-spacing: .1px; }
.url b { font-weight: 400; color: #111; }
.fav { margin-left: 23px; }
.tool-icons { flex: 1; display: flex; align-items: center; padding-left: 20px; }
.tool-sep { width: 1px; height: 16px; margin-left: 16px; background: #ccc; }
.t-favs { margin-left: 16px; }
.t-user { margin-left: 25px; }
.t-more { margin-left: 28px; }
.t-cop { margin-left: 24px; }

/* bookmarks */
.bookmarks { height: 34px; flex: none; display: flex; align-items: center; padding-left: 12px; font: 12px "Open Sans", sans-serif; letter-spacing: -.33px; white-space: nowrap; }
.bm { display: flex; align-items: center; gap: 6px; flex: none; }
.w1 { width: 129px; } .w2 { width: 154px; } .w3 { width: 138px; } .w4 { width: 154px; }
.w5 { width: 96px; } .w6 { width: 76px; } .w7 { width: 83px; } .w8 { width: 155px; letter-spacing: -.25px; }
.w9 { width: 136px; gap: 7px; } .w10 { width: 194px; }
.wf { width: 16px; height: 16px; background: #fff; font: 700 10px/15px "Inter", sans-serif; text-align: center; }
.wf i { color: #e3342f; }

/* application frame */
.app { margin: 1px 4px 0; height: 616px; flex: none; display: flex; border-radius: 8px; overflow: hidden; background: #fff; box-shadow: 0 0 2px #bbb; }
.side { width: 241px; flex: none; border-right: 1px solid #e1e1ec; display: flex; flex-direction: column; padding: 17px 26px 0 27px; }
.collapse { align-self: flex-end; margin-right: -8px; }
.logo { display: flex; margin: 12px 0 0 6px; height: 38px; align-items: center; }
.word { margin: 3px 0 0 4px; font-size: 37.500px; font-weight: 700; line-height: 38px; letter-spacing: -.4px; color: #26282f; }
.dot { width: 5px; height: 5px; border-radius: 50%; background: #f0357a; align-self: flex-end; margin: 0 0 5px 2px; }
.menu { list-style: none; margin: 26px 0 0; padding: 0; display: flex; flex-direction: column; gap: 4.400px; }
.menu li { height: 40px; width: 187px; display: flex; align-items: center; color: #26282f; fill: #26282f; font-size: 14.300px; border-radius: 6px; padding-left: 10px; }
.menu li > svg:first-child { margin: -3px 0 0; width: 22px; }
.menu li span { margin: -1px 0 0 16px; }
.menu .on { background: #8405ff; color: #fff; font-weight: 700; font-size: 14px; }
.menu .more { margin: -2px 0 0 12px; }

.page { width: 1052px; flex: none; background: #fafaff; }
.top { height: 71px; border-bottom: 1px solid #e1e1f0; background: #fff; display: flex; padding: 0 36px 0 29px; align-items: center; }
.titles { flex: 1; margin-top: -6px; }
.crumb { color: #8997bd; font-size: 12.300px; line-height: 16px; }
h1 { margin: 2px 0 0; font-size: 17.300px; line-height: 22px; font-weight: 600; display: flex; align-items: center; gap: 22px; color: #1b1e28; }
.jump { width: 225px; height: 28px; border: 1px solid #e6e6f2; border-radius: 3px; background: #fafaff; display: flex; align-items: center; padding-left: 8px; }
.jump-t { font-size: 12px; margin-left: 8px; width: 102px; letter-spacing: -.05px; }
.jump-k { font-size: 10.600px; margin-left: 8px; white-space: nowrap; }
.create { width: 128px; height: 28px; margin-left: 15px; background: #8405ff; color: #fff; border-radius: 3px; display: flex; align-items: center; justify-content: center; gap: 9px; padding-left: 1px; font-size: 14.100px; font-weight: 500; }

.body { padding: 22px 28px 0 29px; }
.filter { height: 29px; border: 1px solid #e1e1f0; border-radius: 3px; background: #fff; display: flex; align-items: center; }
.f-hist { width: 42px; height: 27px; border-right: 1px solid #e1e1f0; display: flex; align-items: center; justify-content: center; padding-right: 1px; }
.chip { margin: -1px 0 0 4px; height: 22px; width: 440px; background: #e3e3f5; border-radius: 3px; display: flex; align-items: center; font-size: 11px; color: #2b3452; white-space: nowrap; }
.c1 { width: 83px; padding-left: 8px; letter-spacing: -.12px; }
.c2 { width: 54px; height: 20px; line-height: 20px; background: #8896bd; text-align: center; letter-spacing: -.1px; }
.c3 { width: 288px; padding-left: 7px; letter-spacing: -.34px; }
.f-down { margin-left: auto; margin-right: 13px; }
.f-btn { width: 42.500px; height: 27px; border-left: 1px solid #e1e1f0; display: flex; align-items: center; justify-content: center; padding: 0 1px 2px 0; }

.card { background: #fff; border: 1px solid #e1e1f0; border-radius: 3px; }
.stats { display: grid; grid-template-columns: 241px 234px 235px 242px; justify-content: space-between; margin-top: 14px; height: 117px; }
.stat { padding: 21px 23px 0 22px; }
.st-h { display: flex; align-items: center; height: 22px; color: #3b4766; fill: #bd82fb; font-size: 14.300px; }
.st-h span { flex: 1; margin-left: 8px; white-space: nowrap; }
.st-v { margin-top: 11px; font-size: 28.600px; line-height: 36px; font-weight: 600; color: #000; }

.charts { display: grid; grid-template-columns: 656px 325px; gap: 14px; margin-top: 18px; height: 312px; }
.exec { padding: 22px 22px 0; }
.ex-h { display: flex; justify-content: space-between; height: 80px; }
.ct { font-size: 14.100px; font-weight: 600; line-height: 22px; color: #000; }
.ct small { font-size: 10.600px; font-weight: 400; color: #5b6680; margin-left: -1px; }
.big { font-size: 29px; line-height: 36px; margin-top: 2px; color: #000; }
.ex-r { display: flex; flex-direction: column; align-items: flex-end; padding-top: 5px; }
.dur { display: flex; align-items: center; gap: 7px; font-size: 10.600px; color: #4a5673; }
.toggle { width: 36px; height: 18px; border-radius: 9px; background: #8405ff; display: flex; align-items: center; justify-content: space-between; padding: 0 2px 0 8px; }
.toggle i { width: 14px; height: 14px; border-radius: 50%; background: #fff; }
.lg { display: flex; align-items: center; font-size: 12.300px; color: #3b4766; margin-top: 16px; line-height: 16px; }
.lg i { width: 5px; height: 5px; border-radius: 50%; margin-right: 9px; }
.lg span + i { margin-left: 17px; }
.red { background: #fd7278; }
.green { background: #03be8c; }
.plot text { font: 10.500px "Liberation Sans", sans-serif; fill: #38446b; stroke: #38446b; stroke-width: .2px; }
.plot .ax { font-size: 11px; }
.yl text { text-anchor: end; }
.xl text { text-anchor: middle; }
.total { padding: 22px 19px 0 22px; }
.pie { display: flex; margin: 44px 0 0 12px; }
.pc { font: 700 14px "Inter", sans-serif; text-anchor: middle; fill: #222; }
.pl { margin: 38px 0 0 23px; }
.pi { display: flex; align-items: center; gap: 9px; height: 44.500px; }
.pi i { width: 9px; height: 9px; border-radius: 50%; margin-top: 3px; }
.pi b { display: block; font-size: 16px; line-height: 19px; color: #2c3760; font-weight: 600; }
.pi span { display: block; font-size: 12.200px; line-height: 16px; color: #4a5673; }
.next { display: grid; grid-template-columns: 490px 491px; gap: 14px; margin-top: 18px; height: 60px; }

.scroll { width: 8px; flex: none; background: #f0f1f9; border-right: 1px solid #dfe1ee; }
.scroll i { display: block; height: 239px; background: #e2e2f5; }
.rail { flex: 1; background: #fafaff; padding: 11px 14px 0; display: flex; flex-direction: column; }
.rt { width: 29px; border: 1px solid #e1e1f0; border-radius: 3px; background: #fff; display: flex; flex-direction: column; align-items: center; font-size: 12.300px; position: relative; flex: none; padding: 9px 2px 0 0; }
.rt span { writing-mode: vertical-rl; white-space: nowrap; line-height: 16px; margin: 11px -2px 0 0; flex: 1; }
.rt > svg:last-child { margin-bottom: 10px; }
.r1 { height: 75px; } .r2 { height: 72px; margin-top: 8px; } .r3 { height: 94px; margin-top: 8px; }
.r4 { height: 149px; margin-top: 7px; } .r5 { height: 133px; margin-top: 8px; }
.badge { position: absolute; right: -3px; bottom: -2px; width: 7px; height: 7px; border-radius: 50%; background: #a5000f; }
.ver { writing-mode: vertical-rl; align-self: flex-start; margin: 29px 0 0 6px; font-size: 12px; line-height: 18px; color: #b5bedb; }
.slack-color { --a: #36c5f0; --b: #2eb67d; --c: #ecb22e; --d: #e01e5a; }
.slack-black { --a: #111; --b: #111; --c: #111; --d: #111; }

/* taskbar */
.task { margin-top: auto; height: 40px; flex: none; background: #3a3024; display: flex; align-items: center; color: #fff; font-family: "Open Sans", sans-serif; }
.start { width: 48px; display: flex; justify-content: center; }
.search { width: 288px; height: 39px; align-self: flex-end; background: #f1f1f1; display: flex; align-items: center; padding-left: 12px; color: #444; font-size: 14px; }
.search span { margin-left: 10px; white-space: nowrap; letter-spacing: -.05px; flex: 1; }
.art { align-self: flex-end; }
.tv { width: 51px; display: flex; justify-content: center; padding-right: 4px; }
.apps { display: flex; width: 582px; height: 40px; }
.apps div { width: 48.500px; height: 40px; display: flex; align-items: center; justify-content: center; }
.apps .run { background: linear-gradient(#76b9ed, #76b9ed) center bottom / 40px 3px no-repeat; }
.apps .cur { background: #625b51; border-bottom: 3px solid #76b9ed; padding-top: 3px; }
.weather { width: 106px; display: flex; align-items: center; padding-left: 25px; gap: 6px; font-size: 13.500px; letter-spacing: -.4px; }
.tray { width: 168px; display: grid; grid-template-columns: repeat(7, 24px); place-items: center; }
.clock { width: 70px; display: flex; flex-direction: column; align-items: center; font-size: 12px; line-height: 18px; letter-spacing: -.4px; }
.notif { margin-left: 12px; width: 34px; height: 30px; padding-top: 4px; position: relative; }
.notif i { position: absolute; left: 7px; top: 12px; width: 16px; height: 16px; border-radius: 50%; background: #4c453c; border: 1px solid #99938a; font-size: 10px; line-height: 14px; text-align: center; }
```
